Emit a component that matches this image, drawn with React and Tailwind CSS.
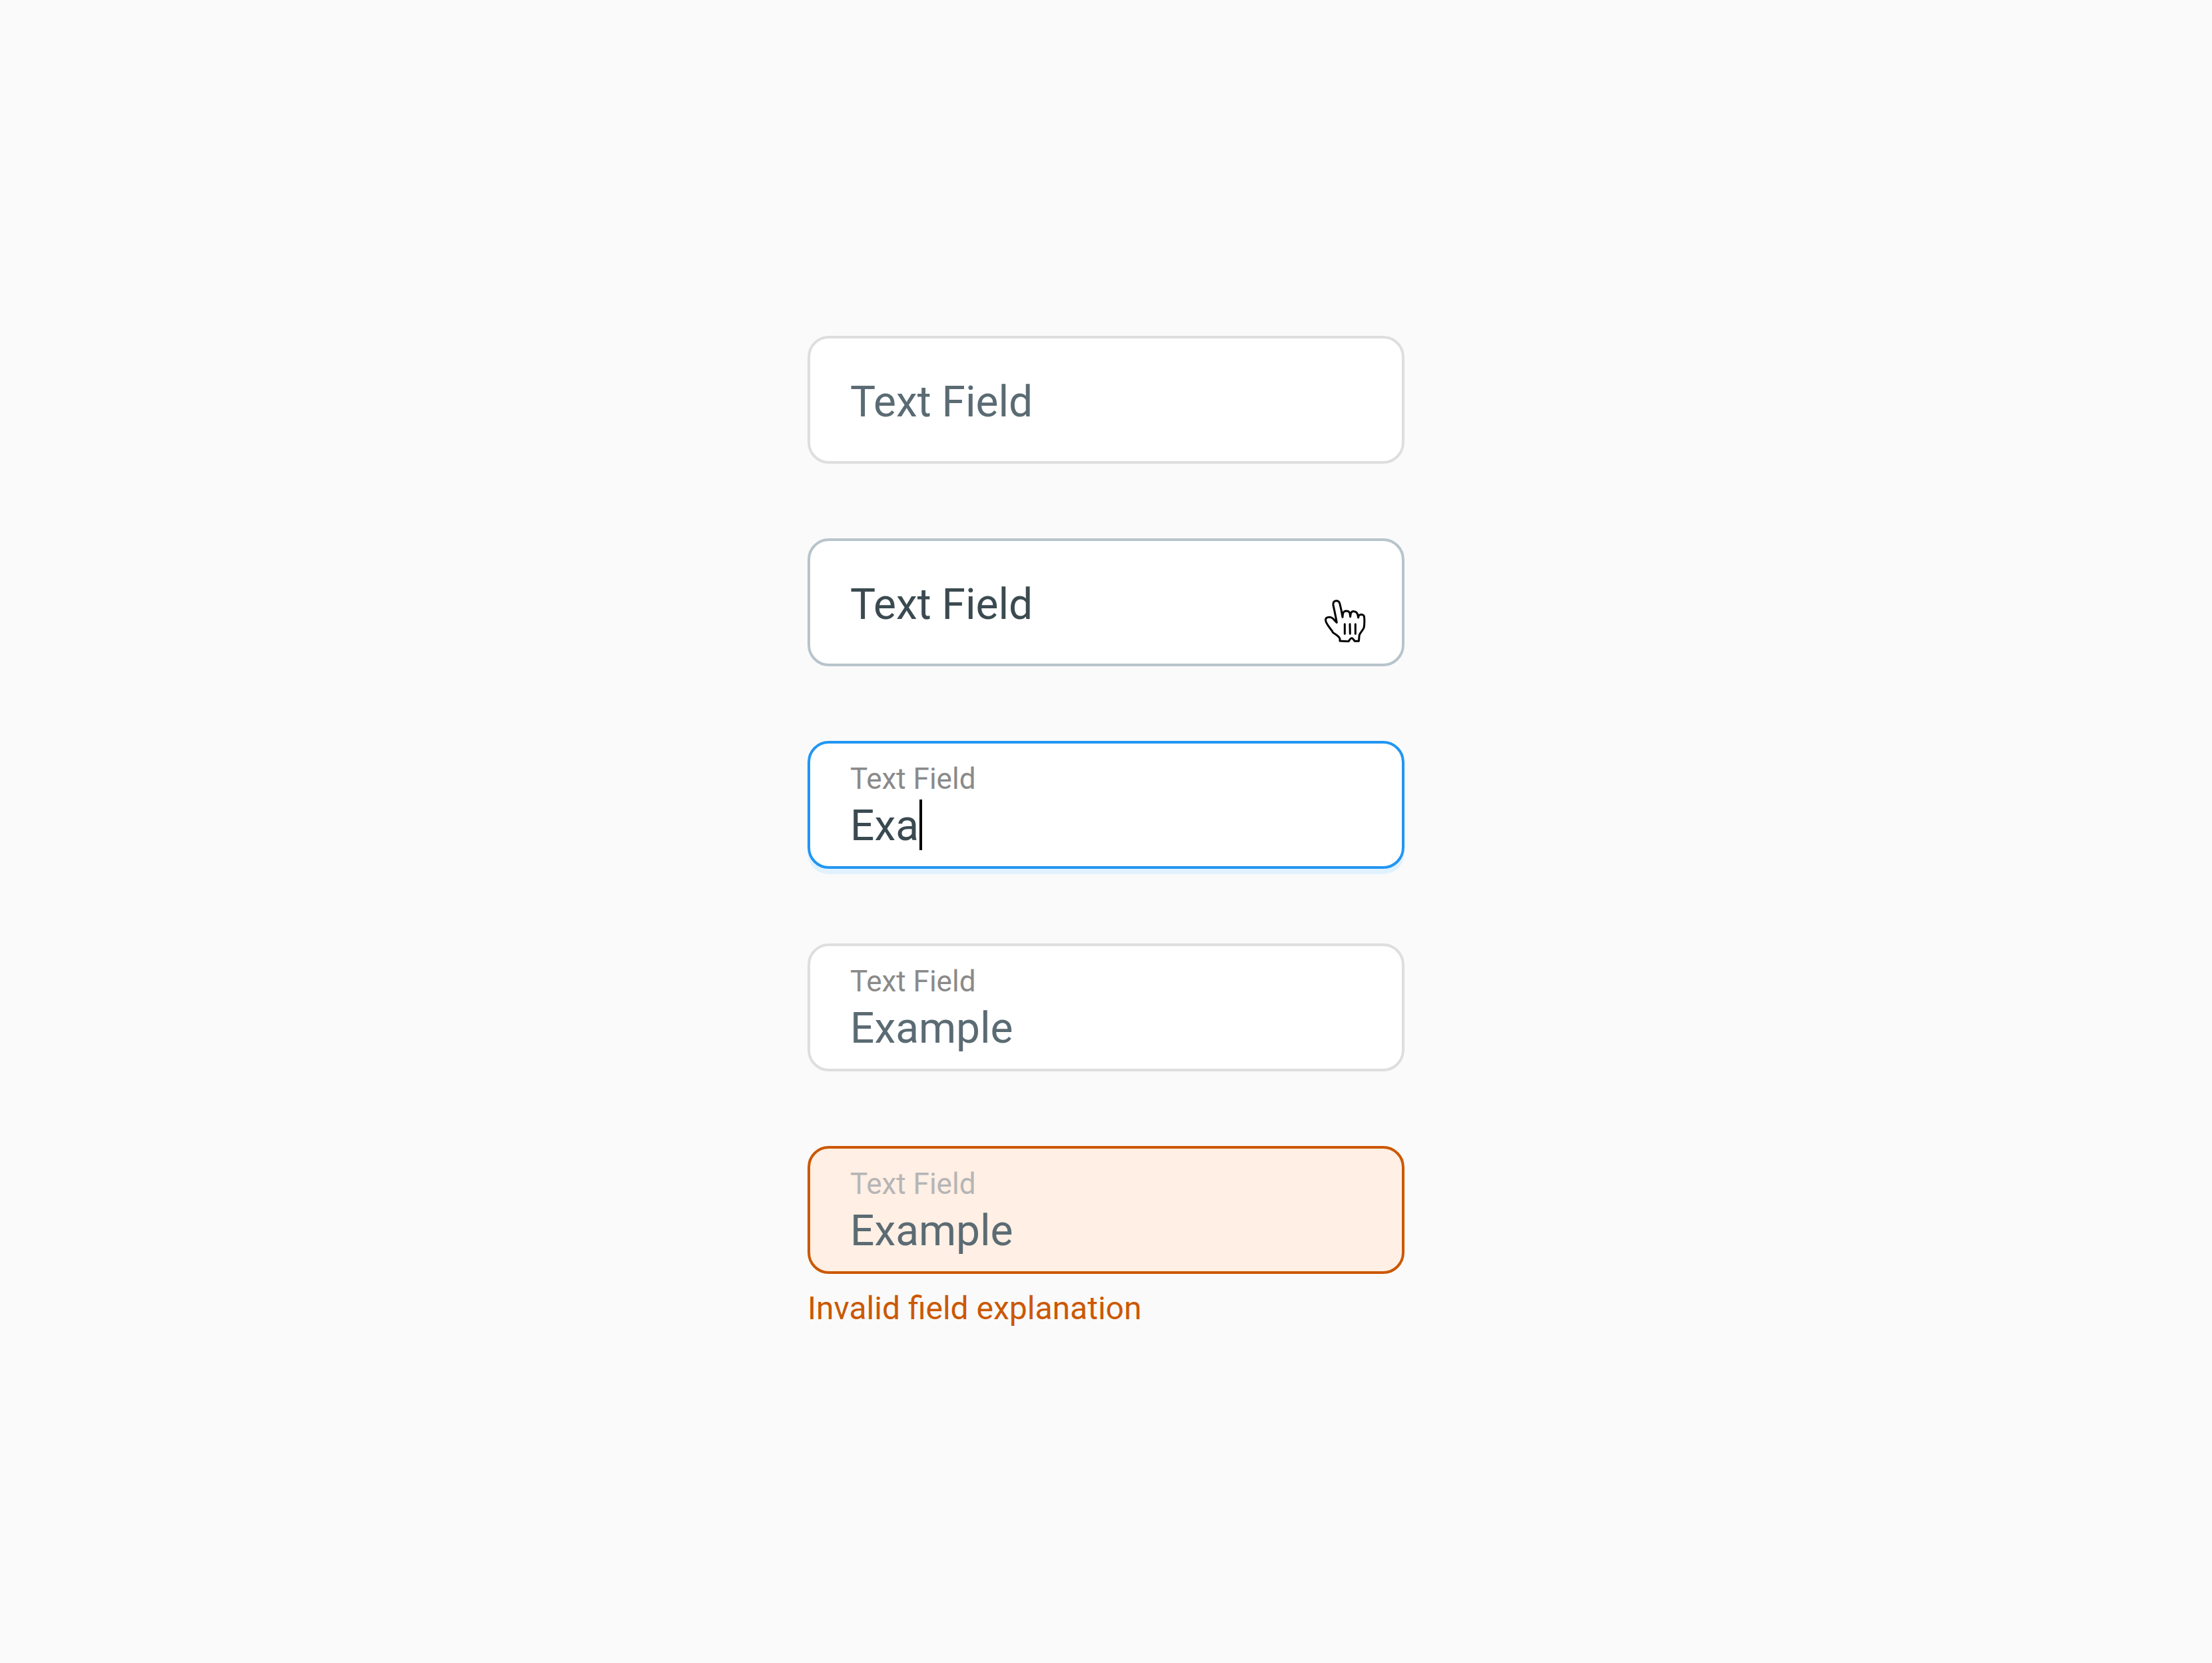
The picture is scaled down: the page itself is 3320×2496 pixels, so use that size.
import { useId } from "react";

const TONES = {
  rest: "border-[#dedede] bg-white text-[#5b6b73]",
  hover: "border-[#b7c4cb] bg-white text-[#3b4a51]",
  focus: "border-[#2196f3] bg-white text-[#3b4a51] shadow-[0_8px_0_#e1f1fe]",
  error: "border-[#cb5800] bg-[#ffefe4] text-[#5b6b73]",
};

function HandCursor() {
  return (
    <svg
      viewBox="81 54 192 198"
      className="pointer-events-none absolute top-[86px] right-[53px] h-[66px] w-16"
      fill="none"
      stroke="#000"
      strokeWidth="9"
      strokeLinecap="round"
      strokeLinejoin="round"
      aria-hidden="true"
    >
      <path
        fill="#fff"
        d="M139 163C134 132 127 104 123 83C122 72 128 65 137 65C146 65 151 70 153 79C158 98 162 119 165 139L167 121C170 114 176 111 182 111C190 111 196 115 198 122L200 137L202 122C205 115 211 112 217 113C226 114 231 119 233 127L236 141L238 132C241 129 245 127 250 127C258 128 263 133 263 141C264 157 264 174 261 187C257 198 245 207 241 219C239 229 240 239 238 247L220 247C216 242 212 233 206 233C200 233 197 242 192 248L153 246L153 236C149 224 131 216 122 208C115 194 102 183 94 167C89 158 86 149 92 143C98 137 112 137 119 143C127 149 132 157 139 163Z"
      />
      <path d="M175 170V214M198 170L199 214M223 170V214" />
    </svg>
  );
}

function TextField({ tone = "rest", label, value, caret, message, children }) {
  const id = useId();
  const filled = value !== undefined;
  return (
    <div className="w-full">
      <div
        className={`relative flex h-48 flex-col rounded-[32px] border-4 px-[60px] ${
          filled ? "pt-6" : "justify-center pt-1"
        } ${TONES[tone]}`}
      >
        {filled && (
          <label
            htmlFor={id}
            className={`text-[44px] leading-[58px] ${
              tone === "error" ? "text-[#b5b5b5]" : "text-[#8a8a8a]"
            }`}
          >
            {label}
          </label>
        )}
        <div className="flex items-center">
          <input
            id={id}
            type="text"
            defaultValue={value}
            placeholder={filled ? undefined : label}
            aria-label={filled ? undefined : label}
            aria-invalid={tone === "error"}
            aria-describedby={message ? `${id}-message` : undefined}
            className={`h-20 min-w-0 bg-transparent pt-0.5 text-[64px] leading-[76px] outline-none placeholder:text-current placeholder:opacity-100 ${
              caret ? "field-sizing-content" : "w-full"
            }`}
          />
          {caret && <span className="ml-px h-[76px] w-1 bg-black" aria-hidden="true" />}
        </div>
        {children}
      </div>
      {message && (
        <p id={`${id}-message`} className="mt-6 text-5xl leading-[56px] text-[#cb5800]">
          {message}
        </p>
      )}
    </div>
  );
}

export default function App() {
  return (
    <main className="flex min-h-screen flex-col items-center justify-center bg-[#fafafa] font-['Roboto',sans-serif]">
      <form className="flex w-full max-w-[896px] flex-col gap-28">
        <TextField label="Text Field" />
        <TextField label="Text Field" tone="hover">
          <HandCursor />
        </TextField>
        <TextField label="Text Field" tone="focus" value="Exa" caret />
        <TextField label="Text Field" value="Example" />
        <TextField
          label="Text Field"
          tone="error"
          value="Example"
          message="Invalid field explanation"
        />
      </form>
    </main>
  );
}
